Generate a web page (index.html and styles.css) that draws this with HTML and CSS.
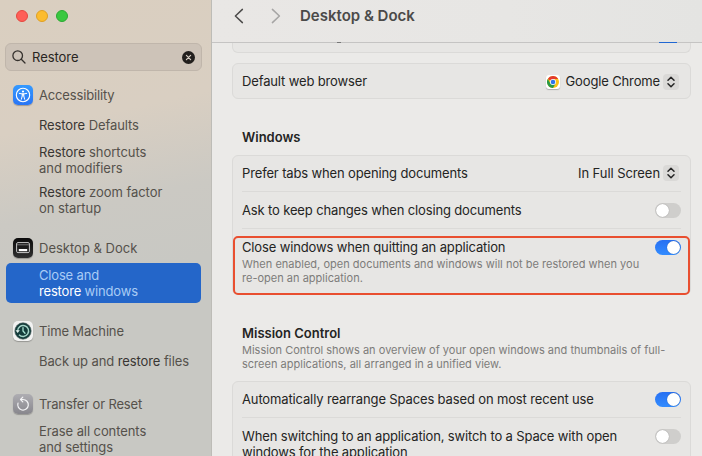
FILE: index.html
```html
<!DOCTYPE html>
<html lang="en">
<head>
<meta charset="utf-8">
<title>Desktop &amp; Dock</title>
<link rel="stylesheet" href="styles.css">
</head>
<body>
<div class="window">
  <aside class="sidebar">
    <div class="lights"><i class="light red"></i><i class="light yellow"></i><i class="light green"></i></div>
    <div class="search">
      <svg width="14" height="14" viewBox="0 0 14 14" fill="none" stroke="#35312d" stroke-width="1.3" stroke-linecap="round"><circle cx="5.7" cy="5.7" r="4.8"/><path d="M9.3 9.3L13 13"/></svg>
      <span class="query">Restore</span>
      <svg class="clear" width="13" height="13" viewBox="0 0 13 13"><circle cx="6.5" cy="6.5" r="6.5" fill="#221f1d"/><path d="M4.4 4.4l4.2 4.2M8.6 4.4l-4.2 4.2" stroke="#d8cfc5" stroke-width="1.2" stroke-linecap="round"/></svg>
    </div>
    <section class="group">
      <h2 class="pane"><span class="icon blue"><svg width="16" height="16" viewBox="0 0 16 16" fill="none" stroke="#fff"><circle cx="8" cy="8" r="6.7" stroke-width="1.1"/><circle cx="8" cy="4.5" r="1.1" fill="#fff" stroke="none"/><path d="M4.3 6.4L8 7l3.7-.6M8 7v2M6.4 12.2L7.2 9V7h1.6v2l.8 3.2" stroke-width="1" stroke-linecap="round" stroke-linejoin="round"/></svg></span><span class="snug">Accessibility</span></h2>
      <a class="item"><span><b>Restore</b> Defaults</span></a>
      <a class="item double"><span><b>Restore</b> shortcuts<br>and modifiers</span></a>
      <a class="item double tight"><span><b>Restore</b> zoom factor<br>on startup</span></a>
    </section>
    <section class="group">
      <h2 class="pane"><span class="icon black"><svg width="16" height="14" viewBox="0 0 16 14"><rect x="1.6" y="1.6" width="12.8" height="10" rx="1.3" fill="none" stroke="#c8c8c8" stroke-width="1"/><path d="M2 3.8h12" stroke="#777" stroke-width="1"/><rect x="3.8" y="8" width="8.4" height="2.2" fill="#fff"/></svg></span><span>Desktop &amp; Dock</span></h2>
      <a class="item double selected"><span>Close and<br><b>restore</b> windows</span></a>
    </section>
    <section class="group">
      <h2 class="pane"><span class="icon white"><svg width="18" height="18" viewBox="0 0 18 18" fill="none"><circle cx="9" cy="9" r="8.2" fill="#143c3b" stroke="#4f6260" stroke-width=".6"/><path d="M3.6 9A5.5 5.5 0 1 1 5 12.7" stroke="#a5d4c8" stroke-width="1.4"/><path d="M1.5 8.3h4.3L3.7 11z" fill="#e0f1ec"/><path d="M9 5.6V9l2 2.2" stroke="#a8e3d3" stroke-width="1.3" stroke-linecap="round"/></svg></span><span class="snug">Time Machine</span></h2>
      <a class="item"><span>Back up and <b>restore</b> files</span></a>
    </section>
    <section class="group">
      <h2 class="pane"><span class="icon gray"><svg width="16" height="16" viewBox="0 0 16 16" fill="none" stroke="#f4f4f6" stroke-width="1.2" stroke-linecap="round" stroke-linejoin="round"><path d="M3 7.1A5.3 5.3 0 1 0 8 3.5H5.7"/><path d="M7.8 1.2L5.5 3.5 7.8 5.8"/></svg></span><span class="snug">Transfer or Reset</span></h2>
      <a class="item double"><span>Erase all contents<br>and settings</span></a>
    </section>
  </aside>
  <main class="main">
    <header class="toolbar">
      <svg width="10" height="16" viewBox="0 0 10 16" fill="none" stroke="#4c4b4a" stroke-width="1.5" stroke-linecap="round" stroke-linejoin="round"><path d="M8.4 1.4L1.4 8l7 6.6"/></svg>
      <svg class="forward" width="10" height="16" viewBox="0 0 10 16" fill="none" stroke="#a6a5a4" stroke-width="1.5" stroke-linecap="round" stroke-linejoin="round"><path d="M1.4 1.4l7 6.6-7 6.6"/></svg>
      <h1>Desktop &amp; Dock</h1>
    </header>
    <div class="content">
      <div class="card cut"><i class="descender"></i><i class="sliver"></i></div>
      <div class="card browser">
        <div class="row"><span class="label">Default web browser</span>
          <span class="picker"><span class="chrome"><svg width="12" height="12" viewBox="0 0 12 12"><circle cx="6" cy="6" r="6" fill="#fbc116"/><path d="M6 6L.8 3A6 6 0 0 1 11.2 3H6z" fill="#e33b2e"/><path d="M.8 3A6 6 0 0 0 6 12L8.6 7.5 6 6 3.4 7.5z" fill="#2a9a48"/><circle cx="6" cy="6" r="3" fill="#fff"/><circle cx="6" cy="6" r="2.3" fill="#2f75ea"/></svg></span><span class="label">Google Chrome</span><span class="stepper"><svg width="8" height="12" viewBox="0 0 8 12" fill="none" stroke="#252525" stroke-width="1.5" stroke-linecap="round" stroke-linejoin="round"><path d="M1 4.2L4 1.2l3 3M1 7.8l3 3 3-3"/></svg></span></span>
        </div>
      </div>
      <h3 class="heading windows">Windows</h3>
      <div class="card group-windows">
        <div class="row"><span class="label">Prefer tabs when opening documents</span>
          <span class="picker"><span class="full">In Full Screen</span><span class="stepper"><svg width="8" height="12" viewBox="0 0 8 12" fill="none" stroke="#252525" stroke-width="1.5" stroke-linecap="round" stroke-linejoin="round"><path d="M1 4.2L4 1.2l3 3M1 7.8l3 3 3-3"/></svg></span></span>
        </div>
        <div class="row"><span class="label">Ask to keep changes when closing documents</span><i class="switch"></i></div>
        <div class="row tall"><div><p class="label">Close windows when quitting an application</p><p class="note">When enabled, open documents and windows will not be restored when you<br>re-open an application.</p></div><i class="switch on"></i></div>
        <div class="highlight"></div>
      </div>
      <h3 class="heading mission">Mission Control</h3>
      <p class="note intro">Mission Control shows an overview of your open windows and thumbnails of full-<br>screen applications, all arranged in a unified view.</p>
      <div class="card group-mission">
        <div class="row"><span class="label">Automatically rearrange Spaces based on most recent use</span><i class="switch on"></i></div>
        <div class="row tall"><p class="label">When switching to an application, switch to a Space with open<br>windows for the application</p><i class="switch"></i></div>
      </div>
    </div>
  </main>
</div>
</body>
</html>
```
FILE: styles.css
```css
* { box-sizing: border-box; }
body { margin: 0; overflow: hidden; font: 13px/16px Inter, "Liberation Sans", sans-serif; color: #242423; }
h1, h2, h3, p { margin: 0; font-weight: 400; }
svg { display: block; flex: none; }
.window { display: flex; width: 702px; height: 456px; overflow: hidden; }

.sidebar { width: 212px; flex: none; border-right: 1px solid #bdbcb7; background: linear-gradient(168deg, #dacfc0 0%, #d9cfc2 27%, #cbc9c3 45%, #c8c8c3 60%, #c8c8c3 100%); color: #55514b; }
.lights { display: flex; gap: 8px; padding: 10px 0 0 16px; height: 43px; }
.light { width: 12px; height: 12px; border-radius: 50%; border: 1px solid; }
.red { background: #fe5f57; border-color: #e5483f; }
.yellow { background: #fcbc2e; border-color: #dfa023; }
.green { background: #3ac840; border-color: #2ba932; }
.search { display: flex; align-items: center; width: 197px; height: 28px; margin-left: 5px; padding: 0 7px 0 6px; border: 1px solid #c0b6ab; border-radius: 6px; background: #cdc3b8; color: #282522; }
.query { margin-left: 6px; letter-spacing: -.05px; }
.clear { margin-left: auto; margin-right: -1px; }
.group { padding-left: 6px; }
.group:nth-of-type(1) { padding-top: 14px; height: 167px; }
.group:nth-of-type(2) { height: 83px; }
.group:nth-of-type(3) { height: 73px; }
.pane { display: flex; align-items: center; gap: 6px; height: 20px; margin-left: 7px; font-size: 13px; }
.snug { letter-spacing: -.16px; }
.icon { display: flex; align-items: center; justify-content: center; width: 20px; height: 20px; border-radius: 5px; box-shadow: 0 1px 1px rgba(0,0,0,.25); }
.blue { background: linear-gradient(#349aff, #2975f5); }
.black { background: linear-gradient(#0b0b0b, #303030); }
.white { background: #f2f2f1; }
.gray { background: linear-gradient(#aeadb2, #88878d); }
.item { display: flex; align-items: center; width: 195px; padding-left: 33px; margin-top: 8px; min-height: 24px; border-radius: 5px; letter-spacing: -.1px; }
.item.double { height: 40px; margin-top: 4px; padding-bottom: 2px; letter-spacing: -.05px; }
.item.double.tight { margin-top: 0; }
.item b { font-weight: 400; color: #393633; }
.item.double.selected { margin-top: 5px; padding-bottom: 0; background: #2466c9; color: #a9ccf5; letter-spacing: -.17px; }
.item.selected b { color: #fff; }
.group:nth-of-type(4) .item { margin-top: 6px; letter-spacing: -.08px; }

.main { flex: 1; display: flex; flex-direction: column; background: #ebeae8; }
.toolbar { display: flex; align-items: center; flex: none; height: 43px; padding: 0 0 11px 22px; border-bottom: 1px solid #c5c4c3; background: linear-gradient(90deg, #e9e7e5, #e7e6e4 60%, #e4e4e2); }
.forward { margin-left: 27px; }
h1 { margin-left: 19px; font-size: 15px; line-height: 18px; font-weight: 600; color: #4b4a49; }
.content { padding-left: 20px; }
.card { position: relative; width: 459px; border: 1px solid #dbdad8; border-radius: 6px; background: #e7e6e4; }
.card.cut { height: 10px; border-top: 0; border-radius: 0 0 6px 6px; }
.descender { position: absolute; left: 104px; top: -1px; width: 4px; height: 1px; background: #777; }
.sliver { position: absolute; right: 13px; top: -1px; width: 18px; height: 1px; background: #2067d2; }
.browser { margin-top: 10px; }
.row { display: flex; align-items: center; justify-content: space-between; height: 37px; margin: 0 9px; border-top: 1px solid #dbdad8; }
.row:first-child { height: 35px; border-top: 0; }
.browser .row { height: 34px; padding-top: 1px; }
.browser .label { padding-bottom: 1px; }
.group-windows .row:first-child { padding-bottom: 1px; }
.label { letter-spacing: -.14px; }
.full { letter-spacing: -.07px; }
.picker { display: flex; align-items: center; }
.chrome { display: flex; align-items: center; justify-content: center; width: 14px; height: 14px; margin-right: 6px; border-radius: 3px; background: #fff; box-shadow: 0 1px 1px rgba(0,0,0,.25); }
.stepper { display: flex; align-items: center; justify-content: center; width: 16px; height: 16px; margin: 0 2px 0 3px; border-radius: 4px; background: #dad9d7; }
.switch { flex: none; width: 26px; height: 15px; padding: 1px; border-radius: 8px; background: #cfcecc; }
.switch::before { content: ""; display: block; width: 13px; height: 13px; border-radius: 50%; background: #fff; box-shadow: 0 0 1px rgba(0,0,0,.4); }
.switch.on { background: linear-gradient(#2870f2, #328cff); }
.switch.on::before { margin-left: 11px; }
.heading { padding-left: 10px; font-size: 13px; line-height: 16px; font-weight: 600; }
.windows { margin-top: 30px; }
.group-windows { margin-top: 10px; height: 140px; }
.row.tall { align-items: flex-start; height: 66px; padding-top: 11px; }
.row.tall .label { margin-top: -1px; }
.note { font-size: 11px; line-height: 14px; color: #7d7c7a; margin-top: 2px; letter-spacing: .01px; }
.highlight { position: absolute; left: 0; top: 80px; width: 457px; height: 59px; border: 2px solid #e94f30; border-radius: 5px; }
.mission { margin-top: 30px; }
.intro { padding-left: 10px; margin-top: 2px; }
.group-mission { margin-top: 10px; height: 110px; }
.group-mission .row:first-child .label { padding-bottom: 1px; }
```
